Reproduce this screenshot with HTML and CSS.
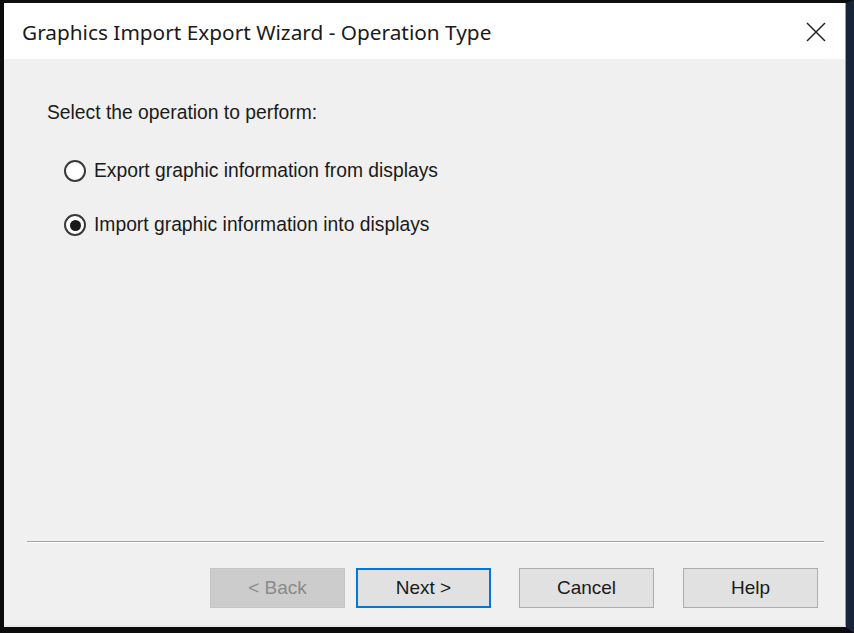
FILE: index.html
```html
<!DOCTYPE html>
<html>
<head>
<meta charset="utf-8">
<link rel="stylesheet" href="styles.css">
</head>
<body>
<div class="window">
  <div class="titlebar">
    <span class="title">Graphics Import Export Wizard - Operation Type</span>
    <svg class="close" width="20" height="20" viewBox="0 0 20 20"><path d="M1 1 L19 19 M19 1 L1 19" stroke="#222" stroke-width="1.5" fill="none"/></svg>
  </div>
  <div class="content">
    <div class="main">
      <p class="prompt">Select the operation to perform:</p>
      <label class="option"><span class="radio"></span><span>Export graphic information from displays</span></label>
      <label class="option"><span class="radio checked"></span><span>Import graphic information into displays</span></label>
    </div>
    <div class="separator"></div>
    <div class="buttons">
      <button class="btn disabled">&lt; Back</button>
      <button class="btn default">Next &gt;</button>
      <button class="btn cancel">Cancel</button>
      <button class="btn help">Help</button>
    </div>
  </div>
</div>
</body>
</html>
```
FILE: styles.css
```css
html, body {
  margin: 0;
  padding: 0;
  height: 100%;
}
body {
  background: #0d0d0f;
  width: 854px;
  height: 633px;
  overflow: hidden;
}
.window {
  box-sizing: border-box;
  width: 854px;
  height: 633px;
  border-left: 4px solid #0c0c0c;
  border-top: 3px solid #0e0e10;
  border-right: 8px solid #17243a;
  border-bottom: 6px solid #0c0c0c;
  display: flex;
  flex-direction: column;
  background: #f0f0f0;
}
.titlebar {
  height: 56px;
  background: #ffffff;
  display: flex;
  align-items: center;
  justify-content: space-between;
  padding: 0 19px 0 18px;
  flex-shrink: 0;
  border-right: 1px solid #9a9a9a;
}
.title {
  font-family: "Noto Sans", "Open Sans", sans-serif;
  font-size: 20.8px;
  color: #1a1a1a;
  margin-top: 1px;
}
.close {
  display: block;
  margin-top: 2px;
}
.content {
  flex: 1;
  display: flex;
  flex-direction: column;
  font-family: "Liberation Sans", Arial, sans-serif;
  font-size: 19.3px;
  color: #1a1a1a;
  border-right: 1px solid #9a9a9a;
  border-bottom: 2px solid #e8e8e8;
}
.main {
  flex: 1;
  padding: 43px 0 0 43px;
}
.prompt {
  margin: 0;
  line-height: 22px;
}
.option {
  display: flex;
  align-items: center;
  gap: 8px;
  margin-left: 17px;
  height: 22px;
}
.option + .option {
  margin-top: 32px;
}
.prompt + .option {
  margin-top: 36px;
}
.radio {
  width: 18px;
  height: 18px;
  border: 2px solid #3a3a3a;
  border-radius: 50%;
  background: #fff;
  box-sizing: content-box;
  position: relative;
  flex-shrink: 0;
}
.radio.checked::after {
  content: "";
  position: absolute;
  left: 3.5px;
  top: 3.5px;
  width: 11px;
  height: 11px;
  border-radius: 50%;
  background: #1a1a1a;
}
.separator {
  height: 0;
  border-top: 1px solid #a0a0a0;
  border-bottom: 1px solid #ffffff;
  margin: 0 21px 0 23px;
}
.buttons {
  display: flex;
  justify-content: flex-end;
  padding: 25px 27px 17px 0;
}
.btn {
  box-sizing: border-box;
  width: 135px;
  height: 40px;
  background: #e1e1e1;
  border: 1px solid #adadad;
  font-family: "Liberation Sans", Arial, sans-serif;
  font-size: 19px;
  color: #1a1a1a;
  padding: 0;
  margin: 0;
}
.btn.disabled {
  background: #cccccc;
  border-color: #c4c4c4;
  color: #8a8a8a;
}
.btn.default {
  border: 2px solid #0078d7;
  margin-left: 11px;
}
.btn.cancel {
  margin-left: 28px;
}
.btn.help {
  margin-left: 29px;
}
```
